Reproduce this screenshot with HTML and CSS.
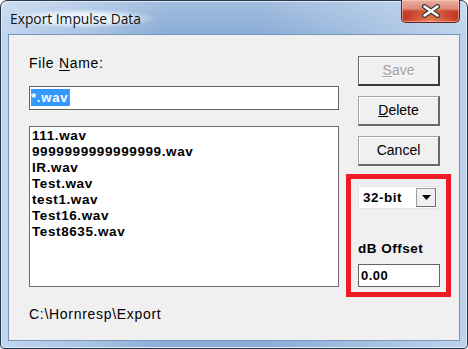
FILE: index.html
```html
<!DOCTYPE html>
<html lang="en">
  <head>
    <meta charset="UTF-8" />
    <title>Export Impulse Data</title>
    <link rel="stylesheet" href="styles.css">
  </head>
  <body>
    <div class="window">
      <div class="titlebar">
        <span class="title">Export Impulse Data</span>
        <div class="close">
          <svg width="20" height="14" viewBox="0 0 20 14">
            <path d="M3.5 2.5 L16.5 11.5 M16.5 2.5 L3.5 11.5" stroke="#3a3a3a" stroke-width="5" stroke-linecap="round" fill="none"/>
            <path d="M3.5 2.5 L16.5 11.5 M16.5 2.5 L3.5 11.5" stroke="#fff" stroke-width="2.6" stroke-linecap="round" fill="none"/>
          </svg>
        </div>
      </div>

      <div class="client">
        <div class="left">
          <div class="label">File <u>N</u>ame:</div>
          <div class="field"><span class="sel">*.wav</span></div>
          <ul class="list">
            <li>111.wav</li>
            <li>9999999999999999.wav</li>
            <li>IR.wav</li>
            <li>Test.wav</li>
            <li>test1.wav</li>
            <li>Test16.wav</li>
            <li>Test8635.wav</li>
          </ul>
          <div class="label path">C:\Hornresp\Export</div>
        </div>

        <div class="right">
          <div class="btn default disabled"><u>S</u>ave</div>
          <div class="btn"><u>D</u>elete</div>
          <div class="btn">Cancel</div>
          <div class="mark">
            <div class="combo">
              <span class="value">32-bit</span>
              <span class="drop">
                <svg width="9" height="5" viewBox="0 0 9 5"><path d="M0 0 H9 L4.5 5 Z" fill="#000"/></svg>
              </span>
            </div>
            <div class="sublabel">dB Offset</div>
            <div class="field small">0.00</div>
          </div>
        </div>
      </div>
    </div>
  </body>
</html>
```

FILE: styles.css
```css
body {
  margin: 0;
  background: #fff;
}
.window {
  width: 468px;
  height: 349px;
  box-sizing: border-box;
  border: 1px solid #2b3b4f;
  border-radius: 7px 7px 4px 4px;
  padding: 0 7px 7px 7px;
  display: flex;
  flex-direction: column;
  background:
    linear-gradient(to bottom, rgba(255,255,255,0.2), rgba(255,255,255,0) 34px),
    linear-gradient(to right, #c2d6ee 0%, #aac4e4 18%, #8badd6 35%, #8aacd6 55%, #a3bfe1 78%, #bed3ec 100%);
  box-shadow: inset 1px 1px 0 #dbe7f5, inset -1px -1px 0 #dbe7f5;
}
.titlebar {
  height: 33px;
  display: flex;
  justify-content: space-between;
  align-items: flex-start;
}
.title {
  font-family: "Open Sans", "Noto Sans", sans-serif;
  font-size: 13.8px;
  color: #111;
  margin-top: 8px;
  padding: 0 14px 0 2px;
  line-height: 19px;
  background: radial-gradient(ellipse at center, rgba(238,245,253,0.95) 35%, rgba(238,245,253,0) 72%);
}
.close {
  width: 59px;
  height: 23px;
  box-sizing: border-box;
  margin-top: -1px;
  border: 1px solid #5b231a;
  border-top: none;
  border-radius: 0 0 5px 5px;
  display: flex;
  align-items: center;
  justify-content: center;
  background:
    radial-gradient(ellipse at 50% 100%, rgba(240,140,90,0.85) 0%, rgba(240,140,90,0) 60%),
    linear-gradient(to bottom, #e9b0a3 0%, #dd8a78 40%, #c4402c 52%, #c33a26 80%, #cc4a30 100%);
  box-shadow: inset 0 0 0 1px rgba(255,210,200,0.5);
}

.client {
  flex: 1;
  display: flex;
  border: 1px solid #7896bb;
  background: #f0f0f0;
  padding-left: 20px;
  font-family: "Liberation Sans", Arial, sans-serif;
  color: #000;
}
.left {
  width: 310px;
}
.label {
  margin-top: 20px;
  font-size: 14px;
  line-height: 16px;
  letter-spacing: 0.7px;
}
.label u {
  text-decoration-thickness: 1px;
  text-underline-offset: 2px;
}
.field {
  margin-top: 15px;
  height: 24px;
  box-sizing: border-box;
  border: 1px solid #646464;
  background: #fff;
  padding: 2px 1px;
  font-size: 13px;
  font-weight: bold;
  letter-spacing: 0.8px;
  line-height: 17px;
}
.sel {
  display: inline-block;
  background: #3399ff;
  color: #fff;
  padding-right: 1px;
  border-right: 1px solid #d9861c;
}
.list {
  list-style: none;
  margin: 16px 0 0 0;
  padding: 1px 2px;
  height: 161px;
  box-sizing: border-box;
  border: 1px solid #6d6d6d;
  background: #fff;
  font-size: 13.5px;
  font-weight: bold;
  letter-spacing: 0.6px;
  line-height: 16px;
}
.path {
  margin-top: 19px;
}

.right {
  margin-left: 7px;
  padding-top: 21px;
  display: flex;
  flex-direction: column;
}
.btn {
  width: 82px;
  height: 30px;
  box-sizing: border-box;
  margin: 0 0 10px 12px;
  border: 1px solid #a3a3a3;
  border-right: 2px solid #6a6a6a;
  border-bottom: 2px solid #6a6a6a;
  background: #f0f0f0;
  box-shadow: inset 1px 1px 0 #fff;
  font-size: 14px;
  line-height: 27px;
  text-align: center;
}
.btn.default {
  border-color: #6b6b6b;
  border-right-color: #3c3c3c;
  border-bottom-color: #3c3c3c;
}
.btn.disabled {
  color: #a0a0a0;
  text-shadow: 1px 1px 0 #fff;
}
.mark {
  margin-top: -2px;
  width: 105px;
  height: 123px;
  box-sizing: border-box;
  border: 5px solid #ed1c24;
  padding: 7px 0 0 7px;
}
.combo {
  width: 80px;
  height: 23px;
  box-sizing: border-box;
  background: #fff;
  border: 1px solid #e6e6e6;
  display: flex;
  align-items: center;
  justify-content: space-between;
  padding: 0 1px 0 4px;
  font-size: 13.5px;
  font-weight: bold;
  letter-spacing: 0.5px;
}
.drop {
  width: 20px;
  height: 19px;
  box-sizing: border-box;
  border: 1px solid #a0a0a0;
  border-right-color: #6a6a6a;
  border-bottom-color: #6a6a6a;
  background: #f0f0f0;
  display: flex;
  align-items: center;
  justify-content: center;
}
.sublabel {
  margin-top: 32px;
  font-size: 13.5px;
  font-weight: bold;
  letter-spacing: 0.5px;
  line-height: 16px;
}
.field.small {
  margin-top: 7px;
  width: 82px;
  height: 23px;
  padding: 2px 2px;
  letter-spacing: 0.5px;
}
```
